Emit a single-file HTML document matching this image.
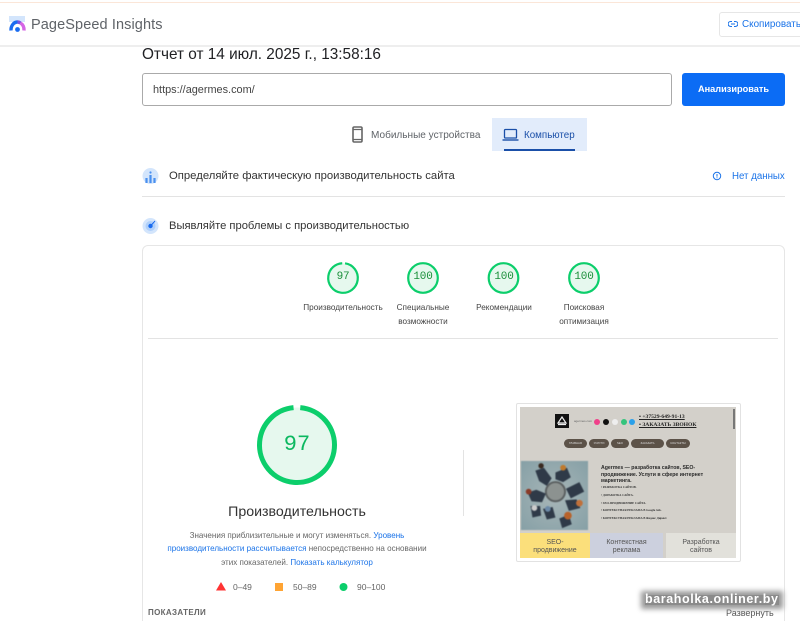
<!DOCTYPE html>
<html><head><meta charset="utf-8"><style>
html,body{margin:0;padding:0;background:#fff;width:800px;height:621px;overflow:hidden}
body{font-family:"Liberation Sans",sans-serif;color:#202124}
#w{position:relative;width:800px;height:621px;overflow:hidden}
.a{position:absolute;white-space:nowrap}
.c{text-align:center}
.g{background:#e3e3e3}
.lab{font-size:8.2px;line-height:13.5px;color:#444;text-align:center;position:absolute;width:90px}
.num{font-family:"Liberation Mono",monospace;font-size:11px;letter-spacing:-.2px;color:#1a8f3a;text-align:center;position:absolute;width:34px}
.desc{font-size:8.05px;color:#666;text-align:center;position:absolute;left:160px;width:274px;white-space:nowrap}
.l{color:#1a73e8}
.p{position:absolute;top:32px;height:9px;border-radius:5px;background:#5c5248;color:#ddd;font-size:2.8px;line-height:9px;text-align:center}
.s{position:absolute;top:12px;width:6px;height:6px;border-radius:50%}
.t{position:absolute;top:126px;height:25px;font-size:7px;line-height:8px;color:#555;padding-top:6px;box-sizing:border-box;text-align:center}
</style></head><body><div id="w">
<div class="a" style="left:0;top:0;width:800px;height:2px;background:#fff;border-bottom:1px solid #fbe6d8"></div>
<div class="a" style="left:0;top:45px;width:800px;height:2px;background:#eee"></div>
<svg class="a" style="left:8px;top:15px" width="20" height="18" viewBox="0 0 20 18">
<rect x="1" y="1" width="16" height="6" fill="#d3e5fc"/>
<path d="M3 15.500 A6.500 8 0 0 1 9.500 7" fill="none" stroke="#1a6cf0" stroke-width="3.400"/>
<path d="M9.500 7 A6.500 8 0 0 1 12.500 8" fill="none" stroke="#7a55e0" stroke-width="3.400"/>
<path d="M12.500 8 A6.500 8 0 0 1 16 15.500" fill="none" stroke="#d565e5" stroke-width="3.400"/>
<circle cx="9.500" cy="14.500" r="2.400" fill="#1a6cf0"/></svg>
<div class="a" style="left:31px;top:16px;font-size:14.5px;line-height:18px;color:#5f6368;letter-spacing:.1px">PageSpeed Insights</div>
<div class="a" style="left:719px;top:12px;width:90px;height:23px;border:1px solid #e6e6e6;border-radius:3px"></div>
<svg class="a" style="left:728px;top:20px" width="10" height="8" viewBox="0 0 10 8"><path d="M4 1.500H2.600a2.500 2.500 0 0 0 0 5H4M6 1.500h1.400a2.500 2.500 0 0 1 0 5H6M3 4h4" fill="none" stroke="#1a73e8" stroke-width="1.100"/></svg>
<div class="a" style="left:742px;top:18px;font-size:9.900px;line-height:13px;color:#1a73e8">Скопировать</div>

<div class="a" style="left:142px;top:45px;font-size:15.35px;line-height:20px;color:#202124">Отчет от 14 июл. 2025 г., 13:58:16</div>
<div class="a" style="left:142px;top:73px;width:528px;height:31px;border:1px solid #aaa;border-radius:3px"></div>
<div class="a" style="left:153px;top:83px;font-size:10.9px;line-height:14px;color:#444">https://agermes.com/</div>
<div class="a c" style="left:682px;top:73px;width:103px;height:33px;background:#0b6cf5;border-radius:3px;color:#fff;font-size:9.200px;font-weight:bold;line-height:33px">Анализировать</div>

<svg class="a" style="left:352px;top:126px" width="11" height="17" viewBox="0 0 11 17"><rect x="1" y="1" width="9" height="15" rx="1.200" fill="none" stroke="#666" stroke-width="1.600"/><path d="M1 3.500h9M1 13.500h9" stroke="#666" stroke-width="1.200"/></svg>
<div class="a" style="left:371px;top:129px;font-size:10.05px;line-height:13px;color:#5f6368">Мобильные устройства</div>
<div class="a" style="left:492px;top:118px;width:95px;height:33px;background:#e2ecfb"></div>
<div class="a" style="left:504px;top:149px;width:71px;height:2px;background:#1a4fa8"></div>
<svg class="a" style="left:502px;top:128px" width="17" height="14" viewBox="0 0 17 14"><rect x="2.500" y="1.500" width="12" height="8.500" rx=".8" fill="none" stroke="#1a4fa8" stroke-width="1.300"/><path d="M.5 12h16" stroke="#1a4fa8" stroke-width="1.400"/></svg>
<div class="a" style="left:524px;top:129px;font-size:9.800px;line-height:13px;color:#1a4fa8">Компьютер</div>

<svg class="a" style="left:142px;top:167px" width="17" height="18" viewBox="0 0 17 18"><circle cx="8.500" cy="9" r="8" fill="#d3e5fc"/><path d="M4.500 11v5M8.500 8v8M12.500 11v5" stroke="#4a90f0" stroke-width="2.200"/><circle cx="8.500" cy="5.500" r="1.100" fill="#4a90f0"/></svg>
<div class="a" style="left:169px;top:169px;font-size:11.3px;line-height:14px;color:#333">Определяйте фактическую производительность сайта</div>
<svg class="a" style="left:712px;top:171px" width="10" height="10" viewBox="0 0 10 10"><circle cx="5" cy="5" r="3.700" fill="none" stroke="#1a73e8" stroke-width="1"/><path d="M5 3v2.600M5 6.400v.9" stroke="#1a73e8"/></svg>
<div class="a" style="left:732px;top:170px;font-size:9.700px;line-height:14px;color:#1a73e8">Нет данных</div>
<div class="a g" style="left:142px;top:196px;width:643px;height:1px"></div>

<svg class="a" style="left:142px;top:217px" width="17" height="18" viewBox="0 0 17 18"><circle cx="8.500" cy="9" r="8" fill="#d3e5fc"/><circle cx="8.500" cy="9" r="5" fill="#b0d0fa"/><circle cx="8.500" cy="9" r="2.200" fill="#1a6cf0"/><path d="M8.500 9L13 4" stroke="#1a6cf0"/></svg>
<div class="a" style="left:169px;top:219px;font-size:11.2px;line-height:14px;color:#333">Выявляйте проблемы с производительностью</div>

<div class="a" style="left:142px;top:245px;width:641px;height:400px;border:1px solid #e6e6e6;border-radius:6px"></div>

<svg class="a" style="left:0;top:0" width="800" height="621" viewBox="0 0 800 621">
<g fill="#e6f8ee" stroke="#0cce6b" stroke-width="2.200">
<circle cx="423" cy="278" r="14.800"/>
<circle cx="503.500" cy="278" r="14.800"/>
<circle cx="584" cy="278" r="14.800"/>
<circle cx="343" cy="278" r="14.800" stroke-dasharray="90 3" transform="rotate(-82 343 278)"/>
<circle cx="297" cy="445" r="37.500" stroke-width="5" stroke-dasharray="228.500 7" transform="rotate(-85 297 445)"/>
</g>
<path d="M216 590.500L221 582L226 590.500Z" fill="#f33"/>
<rect x="275" y="583" width="8" height="8" fill="#ffa433"/>
<circle cx="343.500" cy="587" r="4" fill="#0cce6b"/>
</svg>
<div class="num" style="left:326px;top:271px">97</div>
<div class="num" style="left:406px;top:271px">100</div>
<div class="num" style="left:487px;top:271px">100</div>
<div class="num" style="left:567px;top:271px">100</div>
<div class="lab" style="left:298px;top:301px">Производительность</div>
<div class="lab" style="left:378px;top:301px">Специальные<br>возможности</div>
<div class="lab" style="left:459px;top:301px">Рекомендации</div>
<div class="lab" style="left:539px;top:301px">Поисковая<br>оптимизация</div>
<div class="a g" style="left:148px;top:338px;width:630px;height:1px"></div>

<div class="a c" style="left:257px;top:431px;width:80px;font-family:'Liberation Mono',monospace;font-size:22px;line-height:28px;color:#0cb860">97</div>
<div class="a c" style="left:197px;top:503px;width:200px;font-size:14.2px;line-height:18px;color:#333">Производительность</div>
<div class="desc" style="top:529px;line-height:13px">Значения приблизительные и могут изменяться. <span class="l">Уровень</span></div>
<div class="desc" style="top:542px;line-height:13px"><span class="l">производительности рассчитывается</span> непосредственно на основании</div>
<div class="desc" style="top:556px;line-height:13px">этих показателей. <span class="l">Показать калькулятор</span></div>
<div class="a" style="left:233px;top:581px;font-size:8.500px;line-height:12px;color:#666">0–49</div>
<div class="a" style="left:293px;top:581px;font-size:8.500px;line-height:12px;color:#666">50–89</div>
<div class="a" style="left:357px;top:581px;font-size:8.500px;line-height:12px;color:#666">90–100</div>
<div class="a" style="left:148px;top:607px;font-size:8px;line-height:12px;font-weight:bold;color:#666;letter-spacing:.35px">ПОКАЗАТЕЛИ</div>
<div class="a g" style="left:463px;top:450px;width:1px;height:66px"></div>

<!-- screenshot thumb -->
<div class="a" style="left:516px;top:403px;width:225px;height:159px;background:#fff;border:1px solid #e2e2e2;box-sizing:border-box;border-radius:2px"></div>
<div class="a" style="left:520px;top:407px;width:216px;height:151px;background:#d3d0ca;overflow:hidden">
<div class="a" style="left:35px;top:7px;width:14px;height:14px;background:#111"></div>
<svg class="a" style="left:35px;top:7px" width="14" height="14" viewBox="0 0 14 14"><path d="M7 3L3 9h8zM3 10.500h8" fill="none" stroke="#eee" stroke-width="1.200"/></svg>
<div class="a" style="left:54px;top:12px;font-size:3px;color:#666">agermes.com</div>
<div class="s" style="left:74px;background:#f0408a"></div>
<div class="s" style="left:83px;background:#111"></div>
<div class="s" style="left:92px;background:#eee"></div>
<div class="s" style="left:101px;background:#34c47c"></div>
<div class="s" style="left:109px;background:#2aa0ea"></div>
<div class="a" style="left:119px;top:6px;font:bold 5.600px/8px 'Liberation Serif',serif;color:#222;text-decoration:underline">• +37529-649-91-13</div>
<div class="a" style="left:119px;top:14px;font:bold 5.600px/8px 'Liberation Serif',serif;color:#222;text-decoration:underline">• ЗАКАЗАТЬ ЗВОНОК</div>
<div class="p" style="left:44px;width:23px">ГЛАВНАЯ</div>
<div class="p" style="left:69px;width:20px">УСЛУГИ</div>
<div class="p" style="left:91px;width:18px">SEO</div>
<div class="p" style="left:111px;width:33px">ЗАКАЗАТЬ</div>
<div class="p" style="left:146px;width:24px">КОНТАКТЫ</div>
<svg class="a" style="left:0;top:54px;filter:blur(.6px)" width="69" height="69" viewBox="0 0 70 72">
<defs><radialGradient id="rg" cx=".5" cy=".5" r=".7"><stop offset="0" stop-color="#a8b6b8"/><stop offset="1" stop-color="#86a0a6"/></radialGradient></defs>
<rect width="70" height="72" fill="url(#rg)"/>
<circle cx="36" cy="32" r="10" fill="#8c9290" stroke="#5a5f60" stroke-width="2"/>
<g fill="#2f3a48"><path d="M15 10l9-3 8 11-5 8-8-5z"/><path d="M36 12l12-5 4 10-8 5-8-3z"/><path d="M47 29l14-7 5 10-14 7z"/><path d="M7 33l9-3 10 4-4 9-11-1z"/><path d="M46 41l12-1 4 9-12 3z"/><path d="M10 47l10 0 1 10-9 2z"/><path d="M23 50l10-2 3 11-9 2z"/><path d="M40 60l10-4 3 10-10 4z"/></g>
<g fill="#e2b08e"><circle cx="21" cy="5" r="2.800" fill="#3a2a20"/><circle cx="44" cy="7" r="3" fill="#c07a2c"/><circle cx="8" cy="32" r="3" fill="#8a3b28"/><circle cx="61" cy="44" r="3.500" fill="#c0703a"/><circle cx="49" cy="57" r="4" fill="#b8622a"/><circle cx="14" cy="49" r="3" fill="#ccc"/><circle cx="28" cy="50" r="3" fill="#6c8aa8"/></g>
</svg>
<div class="a" style="left:81px;top:58px;font:bold 5.200px/6.700px 'Liberation Sans',sans-serif;color:#2a2a2a;white-space:normal;width:110px">Agermes — разработка сайтов, SEO-продвижение. Услуги в сфере интернет маркетинга.</div>
<div class="a" style="left:81px;top:77px;font:bold 3px/7.800px 'Liberation Serif',serif;color:#333">• РАЗРАБОТКА САЙТОВ.<br>• ДОРАБОТКА САЙТА.<br>• SEO-ПРОДВИЖЕНИЕ САЙТА.<br>• КОНТЕКСТНАЯ РЕКЛАМА В Google Ads.<br>• КОНТЕКСТНАЯ РЕКЛАМА В Яндекс Директ.</div>
<div class="t" style="left:0;width:70px;background:#fbdf7b">SEO-<br>продвижение</div>
<div class="t" style="left:70px;width:73px;background:#ccd0de">Контекстная<br>реклама</div>
<div class="t" style="left:146px;width:70px;background:#e2e1db">Разработка<br>сайтов</div>
<div class="a" style="left:213px;top:2px;width:2px;height:20px;background:#777"></div>
</div>

<div class="a" style="left:726px;top:607px;font-size:9px;line-height:12px;color:#555">Развернуть</div>
<div class="a" style="left:645px;top:595px;width:134px;height:10px;background:#8b8b8b;box-shadow:0 0 5px 4px #9a9a9a"></div>
<div class="a" style="left:645px;top:592px;font-size:12.500px;line-height:15px;font-weight:bold;color:#fff;letter-spacing:.6px">baraholka.onliner.by</div>
</div></body></html>
